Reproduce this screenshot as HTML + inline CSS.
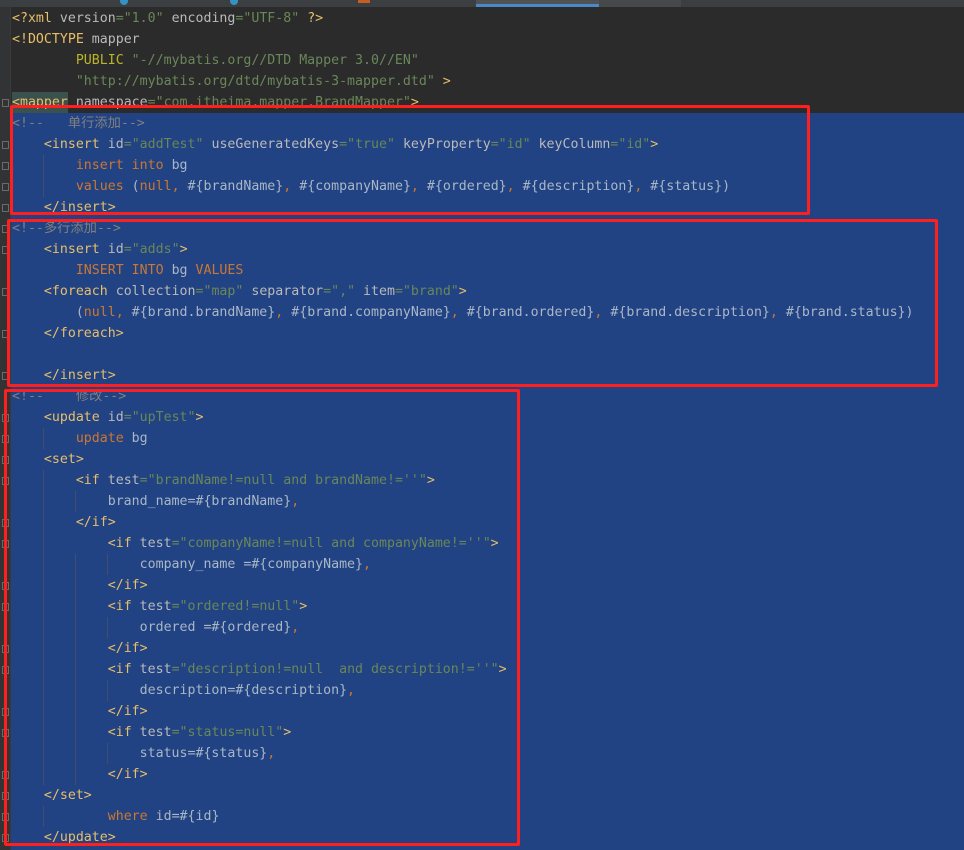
<!DOCTYPE html>
<html><head><meta charset="utf-8"><style>
html,body{margin:0;padding:0;width:964px;height:850px;overflow:hidden;background:#2b2b2b}
#tabs{position:absolute;left:0;top:0;width:964px;height:7px;background:#3c3f41}
#sel{position:absolute;left:11px;top:113px;right:0;bottom:0;background:#214283}
#gut{position:absolute;left:0;top:7px;width:10px;bottom:0;background:#313335;border-right:1px solid #3a3a3a}
.l{position:absolute;left:12px;height:21px;line-height:21px;white-space:pre;font-family:"DejaVu Sans Mono","Noto Sans CJK SC",monospace;font-size:13.25px;color:#a9b7c6}
.t{color:#e8bf6a}.a{color:#bababa}.v{color:#6a8759}.k{color:#cc7832}.c{color:#808080}.p{color:#bbb529}
.box{position:absolute;border:3px solid #ff1f1f;box-sizing:border-box;border-radius:2px}
.g{position:absolute;width:1px;background:#3f4f6f}
.f{position:absolute;left:2px;width:7px;height:8px;border:1px solid #6b6b6b;box-sizing:border-box}
</style></head><body>
<div id="tabs">
<div style="position:absolute;left:120px;top:0;width:8px;height:5px;border-radius:0 0 4px 4px;background:#3592c4"></div>
<div style="position:absolute;left:230px;top:0;width:8px;height:5px;border-radius:0 0 4px 4px;background:#3592c4"></div>
<div style="position:absolute;left:358px;top:0;width:12px;height:3px;background:#c75c25"></div>
<div style="position:absolute;left:476px;top:0;width:123px;height:7px;background:#4e5254;border-bottom:3px solid #4a88c7;box-sizing:border-box"></div>
<div style="position:absolute;left:599px;top:0;width:82px;height:7px;background:#45494a"></div>
</div>
<div id="sel"></div>
<div id="gut"></div>
<div style="position:absolute;left:12px;top:92px;width:56px;height:21px;background:#3b514d"></div>
<div class="g" style="left:43px;top:155px;height:42px"></div>
<div class="g" style="left:43px;top:428px;height:21px"></div>
<div class="g" style="left:43px;top:470px;height:315px"></div>
<div class="g" style="left:75px;top:491px;height:21px"></div>
<div class="g" style="left:75px;top:554px;height:231px"></div>
<div class="g" style="left:43px;top:806px;height:21px"></div>
<div class="g" style="left:107px;top:554px;height:21px"></div>
<div class="g" style="left:107px;top:617px;height:21px"></div>
<div class="g" style="left:107px;top:680px;height:21px"></div>
<div class="g" style="left:107px;top:743px;height:21px"></div>
<div class="f" style="top:99px"></div><div class="f" style="top:141px"></div><div class="f" style="top:162px"></div><div class="f" style="top:183px"></div><div class="f" style="top:204px"></div>
<div class="f" style="top:225px"></div><div class="f" style="top:246px"></div><div class="f" style="top:288px"></div><div class="f" style="top:330px"></div><div class="f" style="top:372px"></div>
<div class="f" style="top:414px"></div><div class="f" style="top:435px"></div><div class="f" style="top:456px"></div><div class="f" style="top:477px"></div><div class="f" style="top:519px"></div>
<div class="f" style="top:540px"></div><div class="f" style="top:582px"></div><div class="f" style="top:603px"></div><div class="f" style="top:645px"></div><div class="f" style="top:666px"></div>
<div class="f" style="top:708px"></div><div class="f" style="top:729px"></div><div class="f" style="top:771px"></div><div class="f" style="top:792px"></div><div class="f" style="top:813px"></div><div class="f" style="top:834px"></div>

<div class="l" style="top:8px"><span class="t">&lt;?xml </span><span class="a">version</span><span class="v">="1.0" </span><span class="a">encoding</span><span class="v">="UTF-8" </span><span class="t">?&gt;</span></div>
<div class="l" style="top:29px"><span class="t">&lt;!DOCTYPE </span><span class="a">mapper</span></div>
<div class="l" style="top:50px">        <span class="p">PUBLIC </span><span class="v">"-//mybatis.org//DTD Mapper 3.0//EN"</span></div>
<div class="l" style="top:71px">        <span class="v">"http://mybatis.org/dtd/mybatis-3-mapper.dtd" </span><span class="t">&gt;</span></div>
<div class="l" style="top:92px"><span class="t">&lt;mapper </span><span class="a">namespace</span><span class="v">="com.itheima.mapper.BrandMapper"</span><span class="t">&gt;</span></div>
<div class="l c" style="top:113px">&lt;!--   单行添加--&gt;</div>
<div class="l" style="top:134px">    <span class="t">&lt;insert </span><span class="a">id</span><span class="v">="addTest" </span><span class="a">useGeneratedKeys</span><span class="v">="true" </span><span class="a">keyProperty</span><span class="v">="id" </span><span class="a">keyColumn</span><span class="v">="id"</span><span class="t">&gt;</span></div>
<div class="l" style="top:155px">        <span class="k">insert into </span>bg</div>
<div class="l" style="top:176px">        <span class="k">values </span>(<span class="k">null, </span>#{brandName}<span class="k">, </span>#{companyName}<span class="k">, </span>#{ordered}<span class="k">, </span>#{description}<span class="k">, </span>#{status})</div>
<div class="l" style="top:197px">    <span class="t">&lt;/insert&gt;</span></div>
<div class="l c" style="top:218px">&lt;!--多行添加--&gt;</div>
<div class="l" style="top:239px">    <span class="t">&lt;insert </span><span class="a">id</span><span class="v">="adds"</span><span class="t">&gt;</span></div>
<div class="l" style="top:260px">        <span class="k">INSERT INTO </span>bg <span class="k">VALUES</span></div>
<div class="l" style="top:281px">    <span class="t">&lt;foreach </span><span class="a">collection</span><span class="v">="map" </span><span class="a">separator</span><span class="v">="," </span><span class="a">item</span><span class="v">="brand"</span><span class="t">&gt;</span></div>
<div class="l" style="top:302px">        (<span class="k">null, </span>#{brand.brandName}<span class="k">, </span>#{brand.companyName}<span class="k">, </span>#{brand.ordered}<span class="k">, </span>#{brand.description}<span class="k">, </span>#{brand.status})</div>
<div class="l" style="top:323px">    <span class="t">&lt;/foreach&gt;</span></div>
<div class="l" style="top:365px">    <span class="t">&lt;/insert&gt;</span></div>
<div class="l c" style="top:386px">&lt;!--    修改--&gt;</div>
<div class="l" style="top:407px">    <span class="t">&lt;update </span><span class="a">id</span><span class="v">="upTest"</span><span class="t">&gt;</span></div>
<div class="l" style="top:428px">        <span class="k">update </span>bg</div>
<div class="l" style="top:449px">    <span class="t">&lt;set&gt;</span></div>
<div class="l" style="top:470px">        <span class="t">&lt;if </span><span class="a">test</span><span class="v">="brandName!=null and brandName!=''"</span><span class="t">&gt;</span></div>
<div class="l" style="top:491px">            brand_name=#{brandName}<span class="k">,</span></div>
<div class="l" style="top:512px">        <span class="t">&lt;/if&gt;</span></div>
<div class="l" style="top:533px">            <span class="t">&lt;if </span><span class="a">test</span><span class="v">="companyName!=null and companyName!=''"</span><span class="t">&gt;</span></div>
<div class="l" style="top:554px">                company_name =#{companyName}<span class="k">,</span></div>
<div class="l" style="top:575px">            <span class="t">&lt;/if&gt;</span></div>
<div class="l" style="top:596px">            <span class="t">&lt;if </span><span class="a">test</span><span class="v">="ordered!=null"</span><span class="t">&gt;</span></div>
<div class="l" style="top:617px">                ordered =#{ordered}<span class="k">,</span></div>
<div class="l" style="top:638px">            <span class="t">&lt;/if&gt;</span></div>
<div class="l" style="top:659px">            <span class="t">&lt;if </span><span class="a">test</span><span class="v">="description!=null  and description!=''"</span><span class="t">&gt;</span></div>
<div class="l" style="top:680px">                description=#{description}<span class="k">,</span></div>
<div class="l" style="top:701px">            <span class="t">&lt;/if&gt;</span></div>
<div class="l" style="top:722px">            <span class="t">&lt;if </span><span class="a">test</span><span class="v">="status=null"</span><span class="t">&gt;</span></div>
<div class="l" style="top:743px">                status=#{status}<span class="k">,</span></div>
<div class="l" style="top:764px">            <span class="t">&lt;/if&gt;</span></div>
<div class="l" style="top:785px">    <span class="t">&lt;/set&gt;</span></div>
<div class="l" style="top:806px">            <span class="k">where </span>id=#{id}</div>
<div class="l" style="top:827px">    <span class="t">&lt;/update&gt;</span></div>

<div class="box" style="left:10px;top:105px;width:800px;height:110px"></div>
<div class="box" style="left:7px;top:219px;width:931px;height:168px"></div>
<div class="box" style="left:4px;top:389px;width:516px;height:457px"></div>
</body></html>
